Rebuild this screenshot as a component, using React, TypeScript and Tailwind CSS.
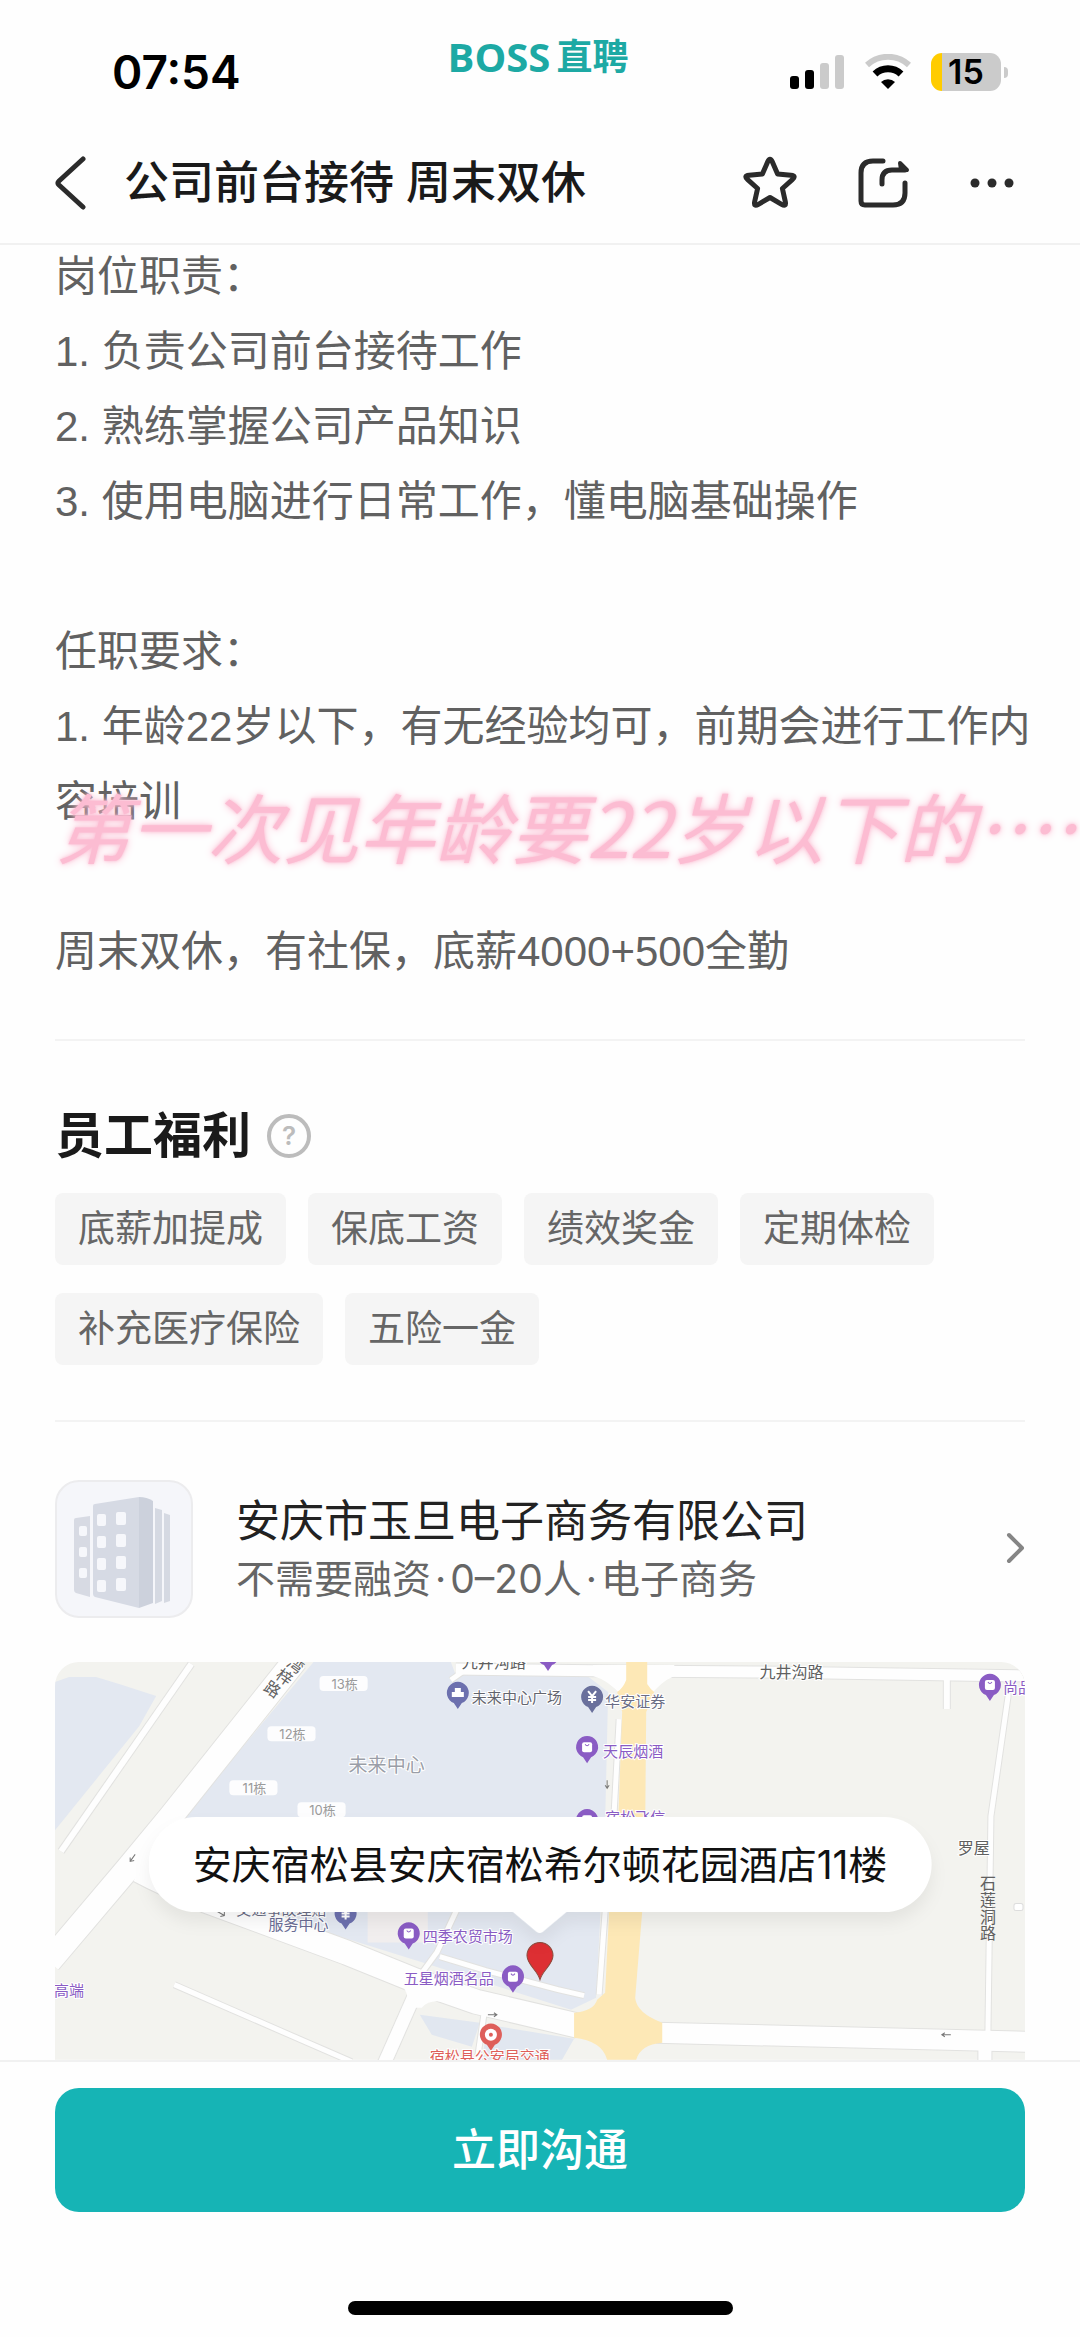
import React from 'react';

type Pin = { x: number; y: number; color: string; kind: 'bag' | 'yen' | 'building' | 'target' };
type Label = { x: number; y: number; text: string; size?: number; color?: string };

const duties = ['岗位职责：', '1. 负责公司前台接待工作', '2. 熟练掌握公司产品知识', '3. 使用电脑进行日常工作，懂电脑基础操作'];
const benefits = ['底薪加提成', '保底工资', '绩效奖金', '定期体检', '补充医疗保险', '五险一金'];

const PURPLE = '#8a5cc4';
const INDIGO = '#6c70ae';

const pins: Pin[] = [
  { x: 492, y: -7, color: PURPLE, kind: 'bag' },
  { x: 402, y: 31, color: INDIGO, kind: 'building' },
  { x: 536, y: 35, color: '#6a709c', kind: 'yen' },
  { x: 531, y: 85, color: PURPLE, kind: 'bag' },
  { x: 531, y: 158, color: PURPLE, kind: 'bag' },
  { x: 933, y: 23, color: PURPLE, kind: 'bag' },
  { x: 290, y: 251, color: INDIGO, kind: 'yen' },
  { x: 353, y: 271, color: PURPLE, kind: 'bag' },
  { x: 457, y: 314, color: PURPLE, kind: 'bag' },
  { x: 435, y: 372, color: '#de5f5a', kind: 'target' },
];

const labels: Label[] = [
  { x: 293, y: 103, text: '未来中心', size: 19, color: '#9a9ea8' },
  { x: 416, y: 35, text: '未来中心广场', color: '#63656f' },
  { x: 406, y: 0, text: '九井沟路', size: 16 },
  { x: 549, y: 39, text: '华安证券', color: '#6a6d85' },
  { x: 547, y: 89, text: '天辰烟酒', color: PURPLE },
  { x: 549, y: 155, text: '宿松飞信', color: PURPLE },
  { x: 703, y: 10, text: '九井沟路', size: 16 },
  { x: 946, y: 25, text: '尚品', color: PURPLE },
  { x: 901, y: 186, text: '罗屋', size: 16 },
  { x: 181, y: 247, text: '交通事故理赔', color: '#6a6d85' },
  { x: 213, y: 262, text: '服务中心', color: '#6a6d95' },
  { x: 367, y: 274, text: '四季农贸市场', color: PURPLE },
  { x: 348, y: 316, text: '五星烟酒名品', color: PURPLE },
  { x: -1, y: 328, text: '高端', color: PURPLE },
  { x: 374, y: 394, text: '宿松县公安局交通', color: '#de5f5a' },
];

const blocks = [
  { x: 264, y: 14, text: '13栋' },
  { x: 212, y: 64, text: '12栋' },
  { x: 174, y: 118, text: '11栋' },
  { x: 242, y: 140, text: '10栋' },
];

const roads = [
  { d: 'M136 2 L6 189', w: 6 },
  { d: 'M240 -2 L115 155 L72 207 L-6 299', w: 24 },
  { d: 'M84 208 Q110 222 150 238 L291 290 L360 318 L420 339 L522 363', w: 24 },
  { d: 'M359 332 L328 402', w: 13 },
  { d: 'M119 322 L296 399', w: 5 },
  { d: 'M367 309 L381 290 L402 245', w: 5 },
  { d: 'M384 294 L430 308 L502 327 L528 333', w: 5 },
  { d: 'M428 352 L421 400', w: 5 },
  { d: 'M563 57 L558 150 L549 249 L543 332', w: 5 },
  { d: 'M395 18 L412 6', w: 5 },
  { d: 'M400 7 L560 9 L700 10 L972 14', w: 11 },
  { d: 'M890 16 L890 47', w: 6 },
  { d: 'M951 20 L951 35 L934 154 L931 370', w: 5 },
  { d: 'M600 370 L972 379', w: 20 },
  { d: 'M928 380 L928 402', w: 13 },
];

const MapPin = ({ x, y, color, kind }: Pin) => (
  <g transform={`translate(${x} ${y})`}>
    <path d="M0 16 L-4 10 A11 11 0 1 1 4 10 Z" fill={color} />
    {kind === 'bag' && (
      <>
        <rect x="-5" y="-5" width="10" height="10" rx="2" fill="#fff" />
        <path d="M-2 -3 Q0 0 2 -3" fill="none" stroke={color} strokeWidth="1" />
      </>
    )}
    {kind === 'yen' && <path d="M-4 -6 L0 -1 L4 -6 M0 -1 V6 M-4 0 H4 M-4 3 H4" fill="none" stroke="#fff" strokeWidth="2" />}
    {kind === 'building' && <path d="M-6 4 V-1 H-3 V-5 H3 V-1 H6 V4 Z" fill="#fff" />}
    {kind === 'target' && (
      <>
        <circle r="6" fill="#fff" />
        <circle r="2" fill={color} />
      </>
    )}
  </g>
);

const CityMap = () => (
  <svg viewBox="0 0 968 397" className="block w-full" role="img" aria-label="地图">
    <rect width="968" height="397" fill="#f3f3ef" />
    <path d="M0 20 L14 15 H41 L64 22 L101 34 L84 64 L0 168 Z" fill="#e3e8f1" />
    <path d="M258 0 H395 L400 13 H530 L552 30 L549 160 L540 335 L515 347 L367 300 L150 232 L127 157 Z" fill="#e3e8f1" />
    <path d="M312 240 H372 V280 H312 Z" fill="#f1eeee" />
    <path d="M364 352 L424 360 L416 384 L376 372 Z M432 362 L518 376 L506 397 H426 Z" fill="#e1e7f0" />

    {roads.map(r => (
      <path key={r.d} d={r.d} fill="none" stroke="#e2e2e0" strokeWidth={r.w + 2} strokeLinejoin="round" />
    ))}
    {roads.map(r => (
      <path key={r.d} d={r.d} fill="none" stroke="#fefefe" strokeWidth={r.w} strokeLinejoin="round" />
    ))}
    <path d="M537 3 H618 V14 Q604 20 594 34 L566 34 Q552 18 537 14 Z" fill="#fefefe" />
    <path d="M340 318 Q356 328 350 345 L366 345 Q376 334 396 342 L380 318 Z" fill="#fefefe" />

    {/* arterial road */}
    <path
      d="M570 0 H591 V22 Q594 27 598 30 L590 50 L589 160 L586 249 L579 335 Q580 350 606 360 V380 Q584 382 580 397 H551 Q546 378 518 375 V350 Q538 348 541 337 L549 330 L553 249 L562 160 L566 50 L561 30 Q567 26 570 18 Z"
      fill="#fde8b6"
    />

    {blocks.map(b => (
      <g key={b.text}>
        <rect x={b.x} y={b.y} width="48" height="15" rx="4" fill="#fdfdfe" />
        <text x={b.x + 25} y={b.y + 8} fontSize="13" fill="#9b9b9b" textAnchor="middle" dominantBaseline="central">{b.text}</text>
      </g>
    ))}

    <g fontSize="16" fill="#606060" textAnchor="middle" dominantBaseline="central">
      <text transform="translate(240 3) rotate(35)">湾</text>
      <text transform="translate(229 15) rotate(35)">梓</text>
      <text transform="translate(217 27) rotate(35)">路</text>
      <text x="931" y="221">石</text>
      <text x="931" y="238">莲</text>
      <text x="931" y="254">洞</text>
      <text x="931" y="270">路</text>
    </g>

    {pins.map(p => (
      <MapPin key={`${p.x}-${p.y}`} {...p} />
    ))}
    {labels.map(l => (
      <text
        key={`${l.x}-${l.y}`}
        x={l.x}
        y={l.y}
        fontSize={l.size ?? 15}
        fill={l.color ?? '#606060'}
        stroke="#ffffff"
        strokeWidth="2"
        paintOrder="stroke"
        dominantBaseline="central"
      >
        {l.text}
      </text>
    ))}

    {/* one-way arrows */}
    <g fill="none" stroke="#777" strokeWidth="1">
      <path d="M551 118 V126 M549 123 L551 126 L553 123" />
      <path d="M80 192 L75 199 M75 195 L75 199 L79 198" />
      <path d="M162 249 L169 253 M169 249 L169 253 L165 254" />
      <path d="M432 352 H441 M438 350 L441 352 L438 354" />
      <path d="M894 372 H885 M888 370 L885 372 L888 374" />
    </g>
    <rect x="957" y="241" width="9" height="7" rx="2" fill="#fff" stroke="#ddd" />
    <path d="M484 317 C481 307 471 302 471 293 A13 13 0 0 1 497 293 C497 302 487 307 484 317 Z" fill="#dd2f33" stroke="#8c4a3c" strokeWidth="1" />
  </svg>
);

const StatusBar = () => (
  <div className="grid h-[122px] grid-cols-3">
    <div className="flex items-center pl-28 pt-[22px] text-[46px] font-semibold leading-none text-black">07:54</div>
    <div className="flex h-[114px] items-center justify-center gap-1.5 pr-1 font-bold leading-none text-[#1da9a4]">
      <span className="font-['Open_Sans'] text-[40px]">BOSS</span>
      <span className="text-[36px]">直聘</span>
    </div>
    <div className="flex items-center justify-end gap-[20px] pr-[72px] pt-[22px]">
      <svg width="55" height="36" viewBox="0 0 55 36" aria-hidden="true">
        <rect x="0" y="22" width="9" height="13" rx="3" fill="#000" />
        <rect x="15" y="16" width="9" height="19" rx="3" fill="#000" />
        <rect x="30" y="9" width="9" height="26" rx="3" fill="#cbcbcb" />
        <rect x="45" y="1" width="9" height="34" rx="3" fill="#cbcbcb" />
      </svg>
      <svg width="46" height="36" viewBox="0 0 46 36" fill="none" aria-hidden="true">
        <path d="M2 11 A31 31 0 0 1 44 11" stroke="#cbcbcb" strokeWidth="6" />
        <path d="M10 20 A19 19 0 0 1 36 20" stroke="#000" strokeWidth="7" />
        <path d="M23 35 L16 28 A10 10 0 0 1 30 28 Z" fill="#000" />
      </svg>
      <div className="flex items-center gap-[3px]">
        <div className="flex h-[38px] w-[70px] items-center justify-center rounded-[11px] bg-linear-to-r from-[#ffcc00] from-16% to-[#cbcbcb] to-16% text-[34px] font-semibold leading-none text-black">
          15
        </div>
        <div className="h-[11px] w-[4px] rounded-r-full bg-[#cbcbcb]" />
      </div>
    </div>
  </div>
);

const TitleBar = () => (
  <div className="flex h-[121px] items-center pl-[54px] pr-[66px] text-[#2b2b2b]">
    <button type="button" aria-label="返回" className="mr-[38px]">
      <svg width="32" height="56" viewBox="0 0 32 56" fill="none" stroke="currentColor" strokeWidth="5" strokeLinecap="round" strokeLinejoin="round">
        <path d="M29 4 L5 26 Q3 28 5 30 L29 52" />
      </svg>
    </button>
    <h1 className="grow whitespace-nowrap text-[45px] font-medium leading-none text-[#1a1a1a]">公司前台接待 周末双休</h1>
    <div className="flex items-center gap-[60px]">
      <button type="button" aria-label="收藏">
        <svg width="56" height="56" viewBox="0 0 56 56" fill="none" stroke="currentColor" strokeWidth="5" strokeLinejoin="round">
          <path d="M25.7 6.8 Q28 1.5 30.3 6.8 L35.6 19 L48.9 20.3 Q54.6 20.8 50.3 24.6 L40.4 33.5 L43.3 46.6 Q44.5 52.2 39.6 49.3 L28 42.5 L16.4 49.3 Q11.5 52.2 12.7 46.6 L15.6 33.5 L5.7 24.6 Q1.4 20.8 7.1 20.3 L20.4 19 Z" />
        </svg>
      </button>
      <button type="button" aria-label="分享">
        <svg width="52" height="50" viewBox="0 0 52 50" fill="none" stroke="currentColor" strokeWidth="5" strokeLinecap="round" strokeLinejoin="round">
          <path d="M25 3 H15 Q3 3 3 15 V43 Q3 47 7 47 H35 Q47 47 47 35 V25" />
          <path d="M24 26 V22 Q24 12 34 12 H47" />
          <path d="M42 5 L49 12 H43 Z" fill="currentColor" strokeWidth="4" />
        </svg>
      </button>
      <button type="button" aria-label="更多">
        <svg width="44" height="44" viewBox="0 0 44 44" fill="currentColor">
          <circle cx="5" cy="22" r="4.5" />
          <circle cx="22" cy="22" r="4.5" />
          <circle cx="39" cy="22" r="4.5" />
        </svg>
      </button>
    </div>
  </div>
);

const CompanyLogo = () => (
  <svg width="138" height="138" viewBox="0 0 138 138" className="shrink-0" aria-hidden="true">
    <rect x="1" y="1" width="136" height="136" rx="23" fill="#f5f6fa" stroke="#ececee" strokeWidth="2" />
    <path d="M19 40 Q19 38 21 38 L35 36 V117 L21 113 Q19 112 19 110 Z" fill="#d7dae3" />
    <path d="M100 28 L107 30 V121 L100 124 Z M109 33 L115 35 V121 L109 123 Z" fill="#d5d9e2" />
    <path d="M38 26 Q38 24 40 24 L84 17 V128 L40 117 Q38 116 38 114 Z" fill="#d6dae4" />
    <path d="M84 17 Q92 17 98 21 V123 L84 128 Z" fill="#ccd1dc" />
    <g fill="#f6f7fb">
      {[34, 56, 78, 100].map(y => (
        <React.Fragment key={y}>
          <rect x="42" y={y} width="9" height="12" rx="2" />
          <rect x="61" y={y - 2} width="10" height="13" rx="2" />
        </React.Fragment>
      ))}
      <rect x="24" y="46" width="8" height="10" rx="2" />
      <rect x="24" y="67" width="8" height="10" rx="2" />
      <rect x="24" y="88" width="8" height="10" rx="2" />
    </g>
  </svg>
);

const App: React.FC = () => {
  return (
    <div className="flex min-h-screen flex-col overflow-hidden bg-[#fefefe] font-['Inter','Noto_Sans_CJK_SC',sans-serif]">
      <header className="border-b-2 border-[#f1f1f1]">
        <StatusBar />
        <TitleBar />
      </header>

      <main className="-mt-1.5 px-[55px]">
        <section className="relative font-['Liberation_Sans','Noto_Sans_CJK_SC',sans-serif] text-[42px] leading-[75px] text-[#616161]">
          {duties.map(line => (
            <p key={line} className="whitespace-nowrap">{line}</p>
          ))}
          <p className="mt-[75px]">任职要求：</p>
          <p className="whitespace-nowrap">
            1. 年龄22岁以下，有无经验均可，前期会进行工作内<br />容培训
          </p>
          <p className="mt-[75px]">周末双休，有社保，底薪4000+500全勤</p>
          <p className="absolute left-0 top-[538px] whitespace-nowrap font-['Noto_Sans_CJK_SC',sans-serif] text-[76px] italic leading-[96px] text-[#fcbcd2] [text-shadow:0_0_3px_#fcbcd2,0_0_8px_#fcbcd2]">
            第一次见年龄要22岁以下的……
          </p>
        </section>

        <section className="mt-[50px] border-t-2 border-[#f3f3f3] pt-[65px]">
          <div className="flex items-center gap-4">
            <h2 className="text-[49px] font-bold leading-[60px] text-[#1a1a1a]">员工福利</h2>
            <button type="button" aria-label="福利说明" className="flex size-11 items-center justify-center rounded-full border-4 border-[#bcbcbc] text-[26px] font-semibold leading-none text-[#bcbcbc]">
              ?
            </button>
          </div>
          <ul className="mt-[27px] flex flex-wrap gap-x-[22px] gap-y-7">
            {benefits.map(b => (
              <li key={b} className="rounded-lg bg-[#f5f5f5] px-[23px] text-[37px] leading-[72px] text-[#666]">{b}</li>
            ))}
          </ul>
        </section>

        <section className="mt-[55px] border-t-2 border-[#f3f3f3] pt-[58px]">
          <a href="#company" className="flex items-center">
            <CompanyLogo />
            <div className="ml-[43px] grow">
              <h3 className="text-[44px] leading-[60px] text-[#222]">安庆市玉旦电子商务有限公司</h3>
              <p className="text-[39px] leading-[56px] text-[#666]">
                不需要融资<span className="mx-1">·</span>0–20人<span className="mx-1">·</span>电子商务
              </p>
            </div>
            <svg width="20" height="34" viewBox="0 0 20 34" fill="none" stroke="#858585" strokeWidth="4" strokeLinecap="round" strokeLinejoin="round" aria-hidden="true">
              <path d="M4 3 L17 16 L4 29" />
            </svg>
          </a>

          <div className="relative mt-11">
            <div className="overflow-hidden rounded-t-3xl">
              <CityMap />
            </div>
            <div className="absolute left-1/2 top-[155px] -translate-x-1/2 drop-shadow-[0_10px_8px_rgba(0,0,0,0.06)]">
              <p className="whitespace-nowrap rounded-full bg-white px-11 text-[39px] leading-[95px] text-[#111]">
                安庆宿松县安庆宿松希尔顿花园酒店11楼
              </p>
              <svg width="56" height="24" viewBox="0 0 56 24" className="absolute left-1/2 top-full -mt-px -translate-x-1/2" aria-hidden="true">
                <path d="M0 0 H56 L31 21 Q28 23 25 21 Z" fill="#fff" />
              </svg>
            </div>
          </div>
        </section>
      </main>

      <footer className="flex grow flex-col items-center border-t-2 border-[#f1f1f1] bg-[#fefefe] px-[55px] pt-[26px]">
        <button type="button" className="h-[124px] w-full rounded-3xl bg-[#16b4b5] text-[44px] font-medium text-white">
          立即沟通
        </button>
        <div className="mb-[22px] mt-auto h-[14px] w-[385px] rounded-full bg-black" />
      </footer>
    </div>
  );
};

export default App;
